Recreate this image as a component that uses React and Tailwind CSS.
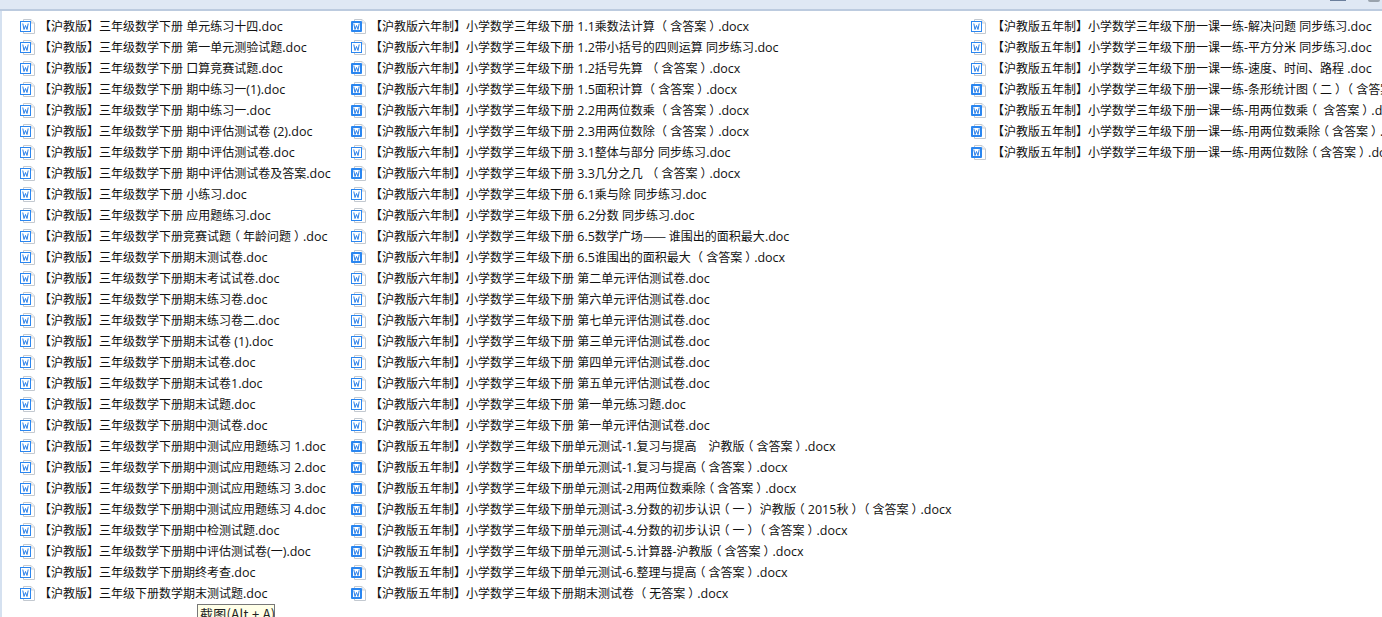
const c1 = [
"【沪教版】三年级数学下册 单元练习十四.doc","【沪教版】三年级数学下册 第一单元测验试题.doc","【沪教版】三年级数学下册 口算竞赛试题.doc","【沪教版】三年级数学下册 期中练习一(1).doc","【沪教版】三年级数学下册 期中练习一.doc","【沪教版】三年级数学下册 期中评估测试卷 (2).doc","【沪教版】三年级数学下册 期中评估测试卷.doc","【沪教版】三年级数学下册 期中评估测试卷及答案.doc","【沪教版】三年级数学下册 小练习.doc","【沪教版】三年级数学下册 应用题练习.doc","【沪教版】三年级数学下册竞赛试题（年龄问题）.doc","【沪教版】三年级数学下册期末测试卷.doc","【沪教版】三年级数学下册期末考试试卷.doc","【沪教版】三年级数学下册期末练习卷.doc","【沪教版】三年级数学下册期末练习卷二.doc","【沪教版】三年级数学下册期末试卷 (1).doc","【沪教版】三年级数学下册期末试卷.doc","【沪教版】三年级数学下册期末试卷1.doc","【沪教版】三年级数学下册期末试题.doc","【沪教版】三年级数学下册期中测试卷.doc","【沪教版】三年级数学下册期中测试应用题练习 1.doc","【沪教版】三年级数学下册期中测试应用题练习 2.doc","【沪教版】三年级数学下册期中测试应用题练习 3.doc","【沪教版】三年级数学下册期中测试应用题练习 4.doc","【沪教版】三年级数学下册期中检测试题.doc","【沪教版】三年级数学下册期中评估测试卷(一).doc","【沪教版】三年级数学下册期终考查.doc","【沪教版】三年级下册数学期末测试题.doc"];
const p6 = "【沪教版六年制】小学数学三年级下册 ";
const p5 = "【沪教版五年制】小学数学三年级下册单元测试-";
const c2 = [
p6+"1.1乘数法计算 （含答案）.docx",p6+"1.2带小括号的四则运算 同步练习.doc",p6+"1.2括号先算  （含答案）.docx",p6+"1.5面积计算 （含答案）.docx",p6+"2.2用两位数乘 （含答案）.docx",p6+"2.3用两位数除 （含答案）.docx",p6+"3.1整体与部分 同步练习.doc",p6+"3.3几分之几  （含答案）.docx",p6+"6.1乘与除 同步练习.doc",p6+"6.2分数 同步练习.doc",p6+"6.5数学广场——谁围出的面积最大.doc",p6+"6.5谁围出的面积最大 （含答案）.docx",p6+"第二单元评估测试卷.doc",p6+"第六单元评估测试卷.doc",p6+"第七单元评估测试卷.doc",p6+"第三单元评估测试卷.doc",p6+"第四单元评估测试卷.doc",p6+"第五单元评估测试卷.doc",p6+"第一单元练习题.doc",p6+"第一单元评估测试卷.doc",
p5+"1.复习与提高　沪教版（含答案）.docx",p5+"1.复习与提高（含答案）.docx",p5+"2用两位数乘除（含答案）.docx",p5+"3.分数的初步认识（一） 沪教版（2015秋）（含答案）.docx",p5+"4.分数的初步认识（一）（含答案）.docx",p5+"5.计算器-沪教版（含答案）.docx",p5+"6.整理与提高（含答案）.docx","【沪教版五年制】小学数学三年级下册期末测试卷 （无答案）.docx"];
const p = "【沪教版五年制】小学数学三年级下册一课一练-";
const c3 = [p+"解决问题 同步练习.doc",p+"平方分米 同步练习.doc",p+"速度、时间、路程 .doc",p+"条形统计图（二）（含答案）.docx",p+"用两位数乘（ 含答案）.docx",p+"用两位数乘除（含答案）.docx",p+"用两位数除（含答案）.docx"];

function Icon({ docx }) {
  return (
    <svg width="16" height="15" viewBox="0 0 16 15" className="shrink-0">
      <path d="M3.5 .5H11L14.5 4V14.5H3.5Z" fill="#fff" stroke="#c3c9d0" />
      <path d="M11 .5V4H14.5" fill="#eef1f4" stroke="#ced3d9" />
      {docx ? <rect x="0" y="2" width="11" height="11" rx="1" fill="#2a86f0" /> : <rect x=".5" y="2.5" width="10" height="10" fill="#fff" stroke="#2a86f0" />}
      {docx && <rect x="2" y="4" width="7" height="7" fill="#fff" />}
      <path d="M2.8 4.5L4 10.5L5.5 6.5L7 10.5L8.2 4.5" fill="none" stroke="#2a7fe8" strokeWidth="1" />
    </svg>
  );
}

function Label({ text, offset }) {
  const parts = text.split(/(（|）|——|[\x00-\x7f]+)/).filter(Boolean);
  return (
    <span className={"text-[12px] text-[#111] whitespace-pre " + offset}>
      {parts.map((s, i) => {
        if (s === "（") return <span key={i} className="inline-block -translate-x-[3px]">{s}</span>;
        if (s === "）") return <span key={i} className="inline-block translate-x-[3px]">{s}</span>;
        if (s === "——") return <span key={i} className="inline-block w-[26px] origin-left scale-x-[1.15]">{s}</span>;
        if (/^[\x00-\x7f]+$/.test(s)) return <span key={i} className="font-['Open_Sans'] text-[12.5px]">{s}</span>;
        return <span key={i}>{s}</span>;
      })}
    </span>
  );
}

function Column({ items, className, offset }) {
  return (
    <div className={"flex flex-col shrink-0 " + className}>
      {items.map((t, i) => (
        <div key={i} className="flex items-center h-[21px] whitespace-nowrap">
          <Icon docx={t.endsWith("docx")} />
          <Label text={t} offset={offset} />
        </div>
      ))}
    </div>
  );
}

export default function App() {
  return (
    <div className="h-[617px] w-[1382px] overflow-hidden relative bg-white flex flex-col font-['Noto_Sans_CJK_SC',sans-serif]">
      <div className="h-[11px] shrink-0 bg-[#dfe8f4] border-b-2 border-[#bccbdf] flex justify-end items-start">
        <div className="w-[16px] h-[1px] bg-[#6b7f9c]" />
        <div className="w-[12px] h-[2px] ml-[22px] mr-[2px] rounded-b-full bg-[#9aa3ad]" />
      </div>
      <div className="flex flex-1 border-l-2 border-[#d5e1f0] pl-[18px] pt-[5px] overflow-hidden">
        <Column items={c1} className="w-[331px]" offset="ml-[3px]" />
        <Column items={c2} className="w-[620px]" offset="ml-[3px]" />
        <Column items={c3} className="w-[411px]" offset="ml-[5px]" />
      </div>
      <div className="absolute left-[197px] top-[604px] h-[20px] w-[78px] px-[2px] bg-[#ffffe8] border border-[#777] text-[13px] leading-[18px] tracking-[0.3px] text-[#222] whitespace-pre">截图(Alt + A)</div>
    </div>
  );
}
